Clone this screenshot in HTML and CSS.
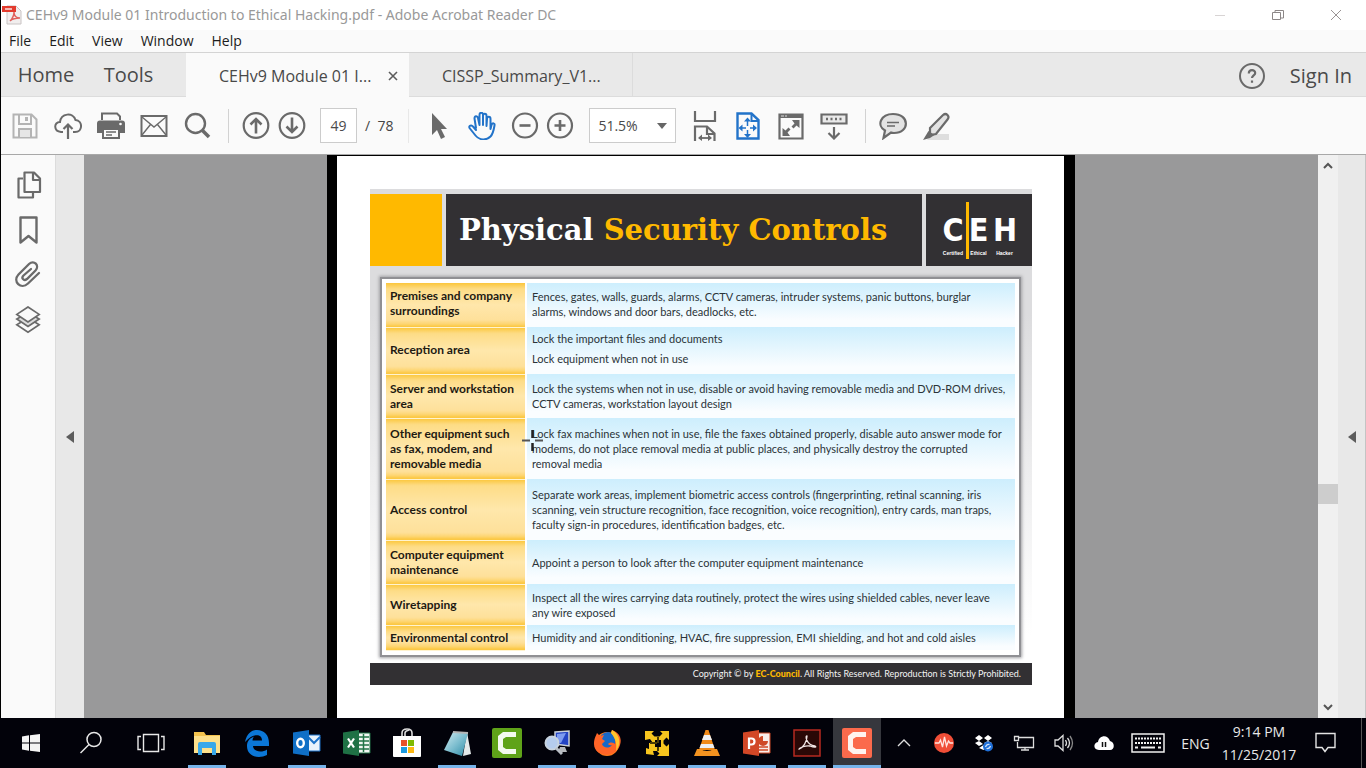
FILE: index.html
```html
<!DOCTYPE html>
<html lang="en">
<head>
<meta charset="utf-8">
<title>CEHv9 Module 01 Introduction to Ethical Hacking.pdf - Adobe Acrobat Reader DC</title>
<link rel="stylesheet" href="styles.css">
</head>
<body>
<div class="window">
  <header class="titlebar">
    <svg class="app-icon" width="20" height="20" viewBox="0 0 20 20"><path d="M5 1h9l5 5v13H5z" fill="#f1eeee" stroke="#c9c4c4"/><path d="M8 16c3-3 4-6 4-9 0 4 2 6 6 6-4 0-8 1-10 3z" fill="none" stroke="#e0605c" stroke-width="1.4"/><path d="M0 1h14v6H0z" fill="#e23b2e"/><path d="M3 4h7" stroke="#f6b8b2" stroke-width="2"/></svg>
    <h1 class="titlebar-text">CEHv9 Module 01 Introduction to Ethical Hacking.pdf - Adobe Acrobat Reader DC</h1>
    <div class="window-controls">
      <button aria-label="Minimize"><svg width="12" height="12"><path d="M1 6.500h10" stroke="#d8d4d4"/></svg></button>
      <button aria-label="Restore"><svg width="12" height="12" fill="none" stroke="#8c8787"><path d="M.5 3.500h8v7h-8zM3 3V1.500h8.500V9H9"/></svg></button>
      <button aria-label="Close"><svg width="12" height="12"><path d="M1 1l10 10M11 1L1 11" stroke="#9a9494"/></svg></button>
    </div>
  </header>
  <nav class="menubar">
    <button>File</button><button>Edit</button><button>View</button><button>Window</button><button>Help</button>
  </nav>
  <div class="tabs">
    <button class="tab-main">Home</button>
    <button class="tab-main tab-tools">Tools</button>
    <div class="tab tab-active"><button>CEHv9 Module 01 I...</button><button class="tab-close" aria-label="Close tab"><svg width="10" height="10"><path d="M1 1l8 8M9 1L1 9" stroke="#5c5c5c" stroke-width="1.600"/></svg></button></div>
    <div class="tab tab-second"><button>CISSP_Summary_V1...</button></div>
    <div class="account">
      <button aria-label="Help"><svg width="28" height="28" viewBox="0 0 28 28" fill="none" stroke="#6a6a6a" stroke-width="2"><circle cx="14" cy="14" r="12"/><path d="M10.800 11.500c0-4.500 6.400-4.200 6.400-.5 0 2.300-3.200 2.500-3.200 5M14 18.500v2.200" stroke-width="2.200"/></svg></button>
      <button class="sign-in">Sign In</button>
    </div>
  </div>
  <div class="toolbar">
    <div class="tool-group files">
      <button aria-label="Save"><svg viewBox="0 0 28 28" fill="none" stroke="#b4b4b4" stroke-width="2"><path d="M2.500 2.500h18l5 5v18h-23zM8 3v9h12V3M8 25v-8h12v8"/><path d="M14 5h3v4h-3z" fill="#b4b4b4" stroke="none"/><path d="M9 18h10v7H9z" fill="#e6e6e6" stroke="none"/></svg></button>
      <button aria-label="Upload"><svg viewBox="0 0 28 28" fill="none" stroke="#6a6a6a" stroke-width="2"><path d="M9 20H7C-.5 19.500-.5 10 6 10c1-9 13-10 15.500-2C29 8.500 29 20 21 20h-2"/><path d="M14 27V13M9.500 17l4.500-4.500 4.500 4.500" stroke-width="2.200"/></svg></button>
      <button aria-label="Print"><svg viewBox="0 0 28 28"><path d="M5 8V1.500h15l3 3V8" fill="#fafafa" stroke="#6a6a6a" stroke-width="2"/><path d="M3 8.500h22q3 0 3 3V21h-5v-4H5v4H0v-9.500q0-3 3-3z" fill="#6a6a6a"/><path d="M6 17h16v9H6z" fill="#fafafa" stroke="#6a6a6a" stroke-width="2"/><path d="M9 20h10M9 23h6" stroke="#6a6a6a" stroke-width="1.500"/><circle cx="23.500" cy="12" r="1.300" fill="#fafafa"/></svg></button>
      <button aria-label="Send by email"><svg viewBox="0 0 28 28" fill="none" stroke="#6a6a6a"><path d="M1.500 4h25v20h-25z" stroke-width="2"/><path d="M2 5l12 10L26 5M2 23l8.500-10.500M26 23l-8.500-10.500" stroke-width="1.400"/></svg></button>
      <button aria-label="Search"><svg viewBox="0 0 28 28" fill="none" stroke="#6a6a6a"><circle cx="12.500" cy="11.500" r="9.500" stroke-width="2.400"/><path d="M19 18l7 7" stroke-width="3.600"/></svg></button>
    </div>
    <span class="separator"></span>
    <div class="tool-group pages">
      <button aria-label="Previous page"><svg viewBox="0 0 28 28" fill="none" stroke="#6a6a6a" stroke-width="2.200"><circle cx="14" cy="13.500" r="12.300"/><path d="M14 21.500V7.500M8.500 12.500L14 7l5.500 5.500" stroke-width="2.600"/></svg></button>
      <button aria-label="Next page"><svg viewBox="0 0 28 28" fill="none" stroke="#6a6a6a" stroke-width="2.200"><circle cx="14" cy="13.500" r="12.300"/><path d="M14 5.500v14M8.500 14.500l5.500 5.500 5.500-5.500" stroke-width="2.600"/></svg></button>
      <input class="page-number" type="text" value="49" aria-label="Page number">
      <span class="page-total">/&nbsp; 78</span>
    </div>
    <span class="separator faint"></span>
    <div class="tool-group view">
      <button aria-label="Select"><svg viewBox="0 0 28 28"><path d="M7 1v22l5-5 4 9 4-2-4-8h6z" fill="#6a6a6a"/></svg></button>
      <button aria-label="Pan"><svg viewBox="0 0 28 28" fill="#fafafa" stroke="#2273c9" stroke-width="2" stroke-linejoin="round" stroke-linecap="round"><path d="M8 16L6.500 6.500c0-3 3-3 3.500-.5l1.500 7V3c0-3 3.500-3 3.500 0v10V4c0-3 3.500-3 3.500 0v10l.5-7c0-3 3.500-3 3.500 0v10l1-4c1-2.500 3.500-2 3 .5-1 6-2 9-4 11-4 4-11 4-15-1L1.500 16c-1-2.500 2-3.500 3.500-1.500l3 3.500"/></svg></button>
      <button aria-label="Zoom out"><svg viewBox="0 0 28 28" fill="none" stroke="#6a6a6a" stroke-width="2.200"><circle cx="14" cy="13.500" r="12"/><path d="M8.500 13.500h11" stroke-width="2.600"/></svg></button>
      <button class="zoom-in" aria-label="Zoom in"><svg viewBox="0 0 28 28" fill="none" stroke="#6a6a6a" stroke-width="2.200"><circle cx="14" cy="13.500" r="12"/><path d="M8.500 13.500h11M14 8v11" stroke-width="2.600"/></svg></button>
      <div class="zoom-box"><select aria-label="Zoom level"><option>51.5%</option></select></div>
      <button aria-label="Fit width"><svg viewBox="0 0 28 32" class="tall" fill="none" stroke="#6a6a6a" stroke-width="2.200"><path d="M4 1v10h20V1M4 31V16.500h12l7.500 7V31M16 17v7h7"/><path d="M8 28h12" stroke-width="1.800"/><path d="M11 24.500V31l-4-3zM17 24.500V31l4-3z" fill="#6a6a6a" stroke="none"/></svg></button>
      <button aria-label="Fit page"><svg viewBox="0 0 28 28" fill="none" stroke="#2273c9" stroke-width="2.400"><path d="M3.500 1.500h14l7 6.500v18.500h-21z"/><path d="M17.500 2v7h7" stroke-width="2"/><path d="M13.500 9v14M7 16h14" stroke-width="1.500" stroke-dasharray="5 4"/><path d="M13.500 5.500l3.500 4h-7zM13.500 26l3.500-4h-7zM4.500 16l4-3.500v7zM23 16l-4-3.500v7z" fill="#2273c9" stroke="none"/></svg></button>
      <button aria-label="Full screen"><svg viewBox="0 0 28 28"><path d="M2.500 2.500h23v24h-23z" fill="none" stroke="#6a6a6a" stroke-width="2.200"/><path d="M2 2h24v4H2z" fill="#6a6a6a"/><path d="M4 4h3M8 4h2" stroke="#ddd"/><path d="M22.500 8v8l-3-2.500-3 3-2-2 3-3L15 8zM5.500 24v-8l3 2.500 3-3 2 2-3 3L13 24z" fill="#6a6a6a"/></svg></button>
      <button aria-label="Read mode"><svg viewBox="0 0 28 28" fill="none" stroke="#6a6a6a" stroke-width="2.200"><path d="M1.500 2.500h25v9h-25z" fill="#e9e9e9"/><path d="M6 7h2M10.500 7h2M15 7h2M19.500 7h2" stroke-width="2.500"/><path d="M14 15v11M8.500 21l5.500 5.500 5.500-5.500"/></svg></button>
    </div>
    <span class="separator"></span>
    <div class="tool-group comment">
      <button aria-label="Comment"><svg viewBox="0 0 28 28" stroke="#6a6a6a"><path d="M14 2c17 0 17 19 1 19-2 0-2 0-3-.5L4.500 26l1.500-7.500C-3 13 2 2 14 2z" fill="#e3e3e3" stroke-width="2.200"/><path d="M8 10.500h12M8 14h8" stroke-width="1.500"/></svg></button>
      <button aria-label="Highlight"><svg viewBox="0 0 28 28"><path d="M10 22h17v6H5z" fill="#dedede"/><path d="M8 16L21 3q2.500-2 4.500 0t0 4.500L14 22l-6 1z" fill="#e3e3e3" stroke="#6a6a6a" stroke-width="2.200"/><path d="M6.500 19l6 4-4.500 3-7 2z" fill="#6a6a6a"/></svg></button>
    </div>
  </div>
  <main class="workspace">
    <aside class="rail">
      <button aria-label="Page thumbnails"><svg viewBox="0 0 28 28" fill="none" stroke="#6a6a6a" stroke-width="2.200" stroke-linejoin="round"><path d="M9 7.500H4.500v19H19V21"/><path d="M10.500 1.500h9.500l6 6V21H10.500zM19 2v7h6"/></svg></button>
      <button aria-label="Bookmarks"><svg viewBox="0 0 28 28" fill="none" stroke="#6a6a6a" stroke-width="2.400" stroke-linejoin="round"><path d="M6.500 1.500h16v25L14.500 20l-8 6.500z"/></svg></button>
      <button aria-label="Attachments"><svg viewBox="0 0 28 28" fill="none" stroke="#6a6a6a" stroke-width="2.300" stroke-linecap="round"><path d="M25 12L14 22.500c-7 6.500-16-2-9.500-9L15 3c5-4.500 11 1.500 6.500 6.500L13 18c-3.500 2.500-6-1-3.500-3.500L17 8"/></svg></button>
      <button aria-label="Layers"><svg viewBox="0 0 28 30" class="tall" fill="#fafafa" stroke="#6a6a6a" stroke-width="1.800"><path d="M14 12.500l12 7.500-12 8L2 20z"/><path d="M14 7l12 7-12 8L2 14z" fill="#dcdcdc"/><path d="M14 1l12 8-12 8L2 9z"/></svg></button>
    </aside>
    <button class="pane-toggle left" aria-label="Expand navigation pane"><svg width="8" height="14"><path d="M8 1v12L0 7z" fill="#5c5c5c"/></svg></button>
    <section class="document">
      <article class="page">
        <div class="slide">
          <div class="slide-head">
            <div class="swatch"></div>
            <h2 class="slide-title">Physical <span>Security Controls</span></h2>
            <div class="ceh">
              <b>C</b><b>E</b><b>H</b>
              <small>Certified</small><small>Ethical</small><small>Hacker</small>
              <i class="ceh-bar"></i>
            </div>
          </div>
          <div class="panel">
            <table class="controls">
              <tr class="row-2 raised"><th scope="row">Premises and company<br>surroundings</th><td>Fences, gates, walls, guards, alarms, CCTV cameras, intruder systems, panic buttons, burglar<br>alarms, windows and door bars, deadlocks, etc.</td></tr>
              <tr class="row-split raised"><th scope="row">Reception area</th><td><p>Lock the important files and documents</p><p>Lock equipment when not in use</p></td></tr>
              <tr class="row-2"><th scope="row">Server and workstation<br>area</th><td>Lock the systems when not in use, disable or avoid having removable media and DVD-ROM drives,<br>CCTV cameras, workstation layout design</td></tr>
              <tr class="row-3"><th scope="row">Other equipment such<br>as fax, modem, and<br>removable media</th><td>Lock fax machines when not in use, file the faxes obtained properly, disable auto answer mode for<br>modems, do not place removal media at public places, and physically destroy the corrupted<br>removal media</td></tr>
              <tr class="row-3"><th scope="row">Access control</th><td>Separate work areas, implement biometric access controls (fingerprinting, retinal scanning, iris<br>scanning, vein structure recognition, face recognition, voice recognition), entry cards, man traps,<br>faculty sign-in procedures, identification badges, etc.</td></tr>
              <tr class="row-2"><th scope="row">Computer equipment<br>maintenance</th><td>Appoint a person to look after the computer equipment maintenance</td></tr>
              <tr class="row-wire"><th scope="row">Wiretapping</th><td>Inspect all the wires carrying data routinely, protect the wires using shielded cables, never leave<br>any wire exposed</td></tr>
              <tr class="row-1"><th scope="row">Environmental control</th><td>Humidity and air conditioning, HVAC, fire suppression, EMI shielding, and hot and cold aisles</td></tr>
            </table>
          </div>
          <footer class="slide-foot">Copyright © by <b>EC-Council</b>. All Rights Reserved. Reproduction is Strictly Prohibited.</footer>
          <svg class="cursor" width="24" height="24" stroke="#222" stroke-width="2.500"><path d="M11.500 1v8M11.500 14v8"/><path d="M1 11.500h8M14 11.500h8" stroke="#555" stroke-width="2"/></svg>
        </div>
      </article>
    </section>
    <div class="scrollbar">
      <button aria-label="Scroll up"><svg width="10" height="8"><path d="M1 6l4-4 4 4" fill="none" stroke="#555" stroke-width="2"/></svg></button>
      <div class="track"><span class="thumb"></span></div>
      <button aria-label="Scroll down"><svg width="10" height="8"><path d="M1 2l4 4 4-4" fill="none" stroke="#555" stroke-width="2"/></svg></button>
    </div>
    <button class="pane-toggle right" aria-label="Expand tools pane"><svg width="8" height="14"><path d="M8 1v12L0 7z" fill="#5c5c5c"/></svg></button>
  </main>
</div>
<footer class="taskbar">
  <div class="shell">
    <button aria-label="Start"><svg width="20" height="20" viewBox="0 0 20 20"><path d="M1 3.500l7-1.200v7.200H1zM9 2.200L19 1v8.500H9zM1 10.500h7v7.200l-7-1.200zM9 10.500h10V19l-10-1.300z" fill="#f4f4f4"/></svg></button>
    <button aria-label="Search"><svg width="24" height="24" fill="none" stroke="#e8e8e8" stroke-width="1.500"><circle cx="15" cy="8.500" r="7"/><path d="M10 13.500L1.500 22"/></svg></button>
    <button aria-label="Task view"><svg width="28" height="20" fill="none" stroke="#e8e8e8" stroke-width="1.400"><path d="M6.500 1.500h15v17h-15zM4 3.500H1v13h3M24 3.500h3v13h-3"/></svg></button>
  </div>
  <div class="apps">
    <button class="running" aria-label="File Explorer"><svg viewBox="0 0 28 28"><path d="M1 3h10l2 3h14v18H1z" fill="#f4c34e"/><path d="M1 7h26v17H1z" fill="#fde08b"/><path d="M5 26V15q0-2 2-2h14q2 0 2 2v11h-4v-7H9v7z" fill="#38a8ea"/></svg></button>
    <button aria-label="Edge"><svg viewBox="0 0 28 28"><path d="M2 13C4 4 9 1 14 1c7 0 12 5 12 13v3H10c.5 6 9 7 14 3.500V26c-8 4-20 2-20-9 0-5 3-8 7-9.500-1 1.200-1.500 2.500-1.500 4H19c0-7-9-7.500-17 1.500z" fill="#0b77d8"/></svg></button>
    <button class="running" aria-label="Outlook"><svg viewBox="0 0 28 28"><path d="M14 6h13v16H14z" fill="#e8f2fc" stroke="#1c72ca"/><path d="M14 7l7 7 6-6" fill="none" stroke="#1c72ca" stroke-width="2"/><path d="M0 3.500L16 1v26L0 24.500z" fill="#0f6fc6"/><ellipse cx="7.500" cy="14" rx="3.300" ry="4.200" fill="none" stroke="#fff" stroke-width="2.400"/></svg></button>
    <button aria-label="Excel"><svg viewBox="0 0 28 28"><path d="M14 4h13v20H14z" fill="#f1f6f2" stroke="#217346"/><path d="M15 8h11M15 12h11M15 16h11M15 20h11M20.500 5v18" stroke="#217346" stroke-width="1.500"/><path d="M0 3.500L16 1v26L0 24.500z" fill="#1f7145"/><path d="M5 9.500l6 9M11 9.500l-6 9" stroke="#fff" stroke-width="2.200"/></svg></button>
    <button aria-label="Store"><svg class="lg" viewBox="0 0 30 30"><path d="M10 8V5q0-4 5-4t5 4v3M13 8V5q0-2 4-3" fill="none" stroke="#ddd" stroke-width="1.600"/><path d="M1 8h28v20q0 1-1 1H2q-1 0-1-1z" fill="#fff"/><path d="M9 12h6v6H9z" fill="#e8502a"/><path d="M16 12h6v6h-6z" fill="#7fba00"/><path d="M9 19h6v6H9z" fill="#1c9ae0"/><path d="M16 19h6v6h-6z" fill="#fdb813"/></svg></button>
    <button class="running" aria-label="Notepad"><svg viewBox="0 0 28 28"><defs><linearGradient id="note" x2="1" y2="1"><stop stop-color="#d2ebf1"/><stop offset=".5" stop-color="#7fbfd0"/><stop offset="1" stop-color="#2c8aa5"/></linearGradient></defs><path d="M24 3l4 22-8 2z" fill="#e4e9ea"/><path d="M10 3l15 1-6 23-18-6z" fill="url(#note)"/><path d="M10 3l15 1" stroke="#b5b5b5" stroke-width="2"/></svg></button>
    <button aria-label="Camtasia"><svg class="lg" viewBox="0 0 30 30"><rect width="30" height="30" rx="2" fill="#5fa319"/><path d="M24 4v5H14l-3 2v8l3 2h10v5H11l-5-4V8l5-4z" fill="#f4faf0"/></svg></button>
    <button class="running" aria-label="Remote Desktop"><svg viewBox="0 0 28 28"><path d="M12 3l14-1v15l-14-2z" fill="#2444c4" stroke="#cbd1d8" stroke-width="1.500"/><path d="M14 5l9-1-5 10-4-1z" fill="#7e9cf0"/><path d="M17 18h5l2 5h-9z" fill="#b6b9bd"/><circle cx="9" cy="14" r="6.500" fill="#b5cced" stroke="#c8d3df" stroke-width="2"/><path d="M13 19l6 6" stroke="#babfc6" stroke-width="3"/></svg></button>
    <button class="running" aria-label="Firefox"><svg viewBox="0 0 28 28"><circle cx="14" cy="15" r="12" fill="#ff7a1a"/><circle cx="15" cy="12" r="9" fill="#1769c8"/><path d="M1 15C1 9 3 7 4 4l3 3 4-1-2 4 3 2-3 3c1 4 7 5 10 1-2 1-4-1-4-1 3-3 6-1 7 0 1-5-1-8-4-11l1-3c8 3 10 9 8 15-4 14-26 12-26-1z" fill="#ff6427"/><path d="M19 1c9 5 9 15 4 21 1-6 0-12-5-18z" fill="#ffc52c"/></svg></button>
    <button class="running" aria-label="VMware"><svg viewBox="0 0 28 28"><path d="M2 2h9l-2.500 2.500 3 3h5l3-3L17 2h9v9l-2.500-2.500-3 3v3l3 3L26 15v12H14l2.500-2.500L14 22h-4l1 4-8-1v-6l3 1v-6h4l-3-4-5 1z" fill="#f7c51e"/><path d="M12 11h6v7h-6z" fill="#02020a"/><path d="M7 14h7M15 8v6M15 18v4" stroke="#4b3b06" stroke-width="2"/></svg></button>
    <button class="running" aria-label="VLC"><svg viewBox="0 0 28 28"><path d="M12.500 1h3L22 21H6z" fill="#f08a18"/><path d="M11 6h6l2 5H9zM8 15h12l1.500 4h-15z" fill="#eef0f2"/><path d="M4 20h3q7 4 14 0h3l3 7H1z" fill="#f39320"/></svg></button>
    <button class="running" aria-label="PowerPoint"><svg viewBox="0 0 28 28"><path d="M14 4h13v20H14z" fill="#f8eeea" stroke="#cf4a27"/><path d="M16 18h9M16 21h9" stroke="#cf4a27" stroke-width="1.500"/><path d="M20 7v5h5a5 5 0 1 1-5-5z" fill="#cf4a27"/><path d="M0 3.500L16 1v26L0 24.500z" fill="#d24726"/><path d="M6 20V9.500h2.500q3 0 3 3t-3 3H6" fill="none" stroke="#fff" stroke-width="2.200"/></svg></button>
    <button class="running" aria-label="Acrobat Reader"><svg viewBox="0 0 28 28"><path d="M1 1h26v26H1z" fill="#2a0806" stroke="#b62a20" stroke-width="1.500"/><path d="M6 20c4-1 8-7 8-13-2-1-1 9 8 10 2 1 0 2-5 0-4-1-11 2-11 3z" fill="none" stroke="#f2e5e4" stroke-width="1.300"/></svg></button>
    <button class="running current" aria-label="Camtasia Recorder"><svg class="lg" viewBox="0 0 30 30"><rect width="30" height="30" rx="2" fill="#fb6a4c"/><path d="M24 4v5H14l-3 2v8l3 2h10v5H11l-5-4V8l5-4z" fill="#fff3ef"/></svg></button>
  </div>
  <div class="tray">
    <button aria-label="Show hidden icons"><svg width="14" height="8"><path d="M1 7l6-6 6 6" fill="none" stroke="#ddd" stroke-width="1.400"/></svg></button>
    <button aria-label="Recorder"><svg width="20" height="20"><circle cx="10" cy="10" r="10" fill="#f04e37"/><path d="M1 10h4l1.500-3 2 7 2-10 2 9 2-5 1.500 2h3" fill="none" stroke="#ffe5df" stroke-width="1.300"/></svg></button>
    <button aria-label="Dropbox"><svg width="20" height="18"><path d="M1 4l4-3 4 3-4 3zM10 4l4-3 4 3-4 3zM1 9l4-2 4 3-4 2zM10 9l4-2 4 2-4 3zM5 14l4.500-3 3 2-3 3z" fill="#fff"/><circle cx="14" cy="12.500" r="5" fill="#1f6fd8"/><path d="M11.500 13q1-3 4-2.500M16.500 12q-1 3-4 2.500" fill="none" stroke="#cfe2fa" stroke-width="1.200"/></svg></button>
    <button aria-label="Network"><svg width="22" height="16" fill="none" stroke="#ddd" stroke-width="1.300"><path d="M6 2.500h14.500v10H4.500V7M1.500 1.500h4v4h-4zM12 12.500V15M8 15h8"/></svg></button>
    <button aria-label="Volume"><svg width="20" height="18" fill="none" stroke="#ddd" stroke-width="1.300"><path d="M1 6h3l5-4.500v15L4 12H1z"/><path d="M11.500 6q2 3 0 6M13.500 4q4 5 0 10"/><path d="M16 2q5 7 0 14" stroke="#888"/></svg></button>
    <button aria-label="Cloud sync"><svg width="20" height="15"><path d="M5 14C-1 14-1 7 4 6c1-7 10-8 12-1 5 1 5 9 0 9z" fill="#fff"/><path d="M8.500 6v5M11.500 6v5" stroke="#111" stroke-width="1.500"/></svg></button>
    <button class="tray-wide" aria-label="Touch keyboard"><svg width="34" height="20" fill="none" stroke="#f0f0f0" stroke-width="1.500"><path d="M1 1h32v18H1z"/><path d="M4 5.500h26M4 10h26" stroke-dasharray="2 1" stroke-width="2"/><path d="M4 14.500h3M10 14.500h14M27 14.500h3" stroke-width="2"/></svg></button>
    <button class="lang">ENG</button>
    <button class="clock"><time>9:14 PM</time><time>11/25/2017</time></button>
    <button class="notify" aria-label="Notifications"><svg width="22" height="22"><path d="M1 1.500h19v14h-7l-3 4-3-4H1z" fill="none" stroke="#e4e4e4" stroke-width="1.400"/></svg></button>
    <span class="show-desktop"></span>
  </div>
</footer>
</body>
</html>
```
FILE: styles.css
```css
* { box-sizing: border-box; }

body {
  margin: 0;
  height: 100vh;
  display: flex;
  flex-direction: column;
  overflow: hidden;
  background: #000;
  color: #444;
  font-family: "Open Sans", "Noto Sans", sans-serif;
}

button {
  display: flex;
  align-items: center;
  justify-content: center;
  padding: 0;
  border: 0;
  background: none;
  color: inherit;
  font: inherit;
  white-space: nowrap;
}

svg { display: block; flex: none; }

.window {
  flex: 1;
  min-height: 0;
  display: flex;
  flex-direction: column;
  border-left: 1px solid #000;
  background: #fafafa;
}

/* Title and menu */
.titlebar {
  height: 30px;
  display: flex;
  align-items: center;
  gap: 4px;
  padding-left: 1px;
  background: #fff;
}
.titlebar-text {
  flex: 1;
  margin: 0;
  color: #999;
  font-family: "Noto Sans", sans-serif;
  font-size: 14px;
  font-weight: 400;
  line-height: 28px;
  white-space: nowrap;
}
.window-controls { display: flex; gap: 10px; padding-right: 6px; }
.window-controls button { width: 48px; height: 28px; }

.menubar {
  height: 23px;
  display: flex;
  gap: 18px;
  padding: 0 0 2px 8px;
  border-bottom: 1px solid #d4d4d4;
  color: #1c1c1c;
  font-size: 14px;
}

/* Tabs */
.tabs {
  height: 44px;
  display: flex;
  background: #e9e9e9;
  border-bottom: 1px solid #dcdcdc;
}
.tab-main { width: 90px; font-size: 20px; font-weight: 500; color: #4a4a4a; }
.tab-tools { width: 95px; padding-right: 20px; }
.tab { display: flex; align-items: center; padding-top: 2px; font-size: 16px; color: #484848; }
.tab-active { width: 223px; gap: 17px; padding-left: 33px; background: #fafafa; margin-bottom: -1px; }
.tab-second { width: 224px; padding-left: 33px; border-right: 1px solid #dcdcdc; }
.account { display: flex; gap: 24px; margin-left: auto; padding: 2px 14px 0 0; }
.sign-in { font-size: 20px; font-weight: 500; color: #4a4a4a; }

/* Toolbar */
.toolbar {
  height: 58px;
  display: flex;
  align-items: center;
  padding-left: 10px;
  border-bottom: 1px solid #a8a8a8;
}
.tool-group { display: flex; align-items: center; }
.tool-group svg, .rail svg { width: 28px; height: 28px; }
.tool-group svg.tall { height: 32px; }
.files { gap: 15px; }
.pages { gap: 8px; }
.view, .comment { gap: 15px; }
.separator { width: 1px; height: 34px; margin: 0 13px 0 17px; background: #d2d2d2; }
.faint { margin: 0 16px 0 15px; background: #e8e8e8; }
.page-number {
  width: 37px;
  height: 35px;
  margin-left: 6px;
  padding: 0;
  border: 1px solid #ccc;
  background: #fff;
  color: #4a4a4a;
  font: 14px "Open Sans", sans-serif;
  text-align: center;
}
.page-total { font-size: 14px; }
.zoom-in { margin-left: -8px; }
.zoom-box { display: flex; align-items: center; position: relative; }
.zoom-box::after {
  content: "";
  position: absolute;
  right: 9px;
  border: 5px solid transparent;
  border-top: 6px solid #666;
  border-bottom: 0;
}
.zoom-box select {
  width: 87px;
  height: 35px;
  padding: 0 8px;
  appearance: none;
  border: 1px solid #ccc;
  border-radius: 0;
  background: #fff;
  color: #4a4a4a;
  font: 14px "Open Sans", sans-serif;
}

/* Workspace */
.workspace { flex: 1; min-height: 0; display: flex; }
.rail {
  width: 55px;
  display: flex;
  flex-direction: column;
  align-items: center;
  gap: 17px;
  padding-top: 16px;
  border-right: 1px solid #dcdcdc;
}
.pane-toggle { width: 28px; background: #e8e8e8; }
.pane-toggle.right { border-right: 1px solid #c4c4c4; }
.document {
  flex: 1;
  display: flex;
  justify-content: center;
  overflow: hidden;
  background: #99999a;
}
.scrollbar {
  width: 20px;
  display: flex;
  flex-direction: column;
  background: #f0f0f0;
}
.scrollbar button { height: 22px; }
.track { flex: 1; display: flex; flex-direction: column; padding-top: 307px; }
.thumb { height: 20px; background: #cdcdcd; }

/* PDF page */
.page {
  width: 100%;
  max-width: 748px;
  padding: 33px 32px 0 33px;
  border: solid #000;
  border-width: 1px 11px 0 10px;
  background: #fff;
}
.slide {
  position: relative;
  padding-top: 5px;
  background: linear-gradient(#dcdcde 25%, #fff 90%);
  color: #2b3338;
  font-family: Lato, "Open Sans", sans-serif;
}
.slide-head {
  display: grid;
  grid-template-columns: 72px 1fr 106px;
  gap: 4px;
  height: 72px;
}
.swatch { background: #ffb900; }
.slide-title {
  display: flex;
  align-items: center;
  margin: 0;
  padding-left: 13px;
  background: #323033;
  color: #fff;
  font: bold 29px "DejaVu Serif", serif;
  white-space: pre;
}
.slide-title span { color: #ffb900; }
.ceh {
  position: relative;
  display: grid;
  grid-template-columns: 22px 29px 23px;
  grid-template-rows: 36px 10px;
  align-content: center;
  justify-content: center;
  padding-top: 10px;
  background: #323033;
  color: #fff;
  text-align: center;
}
.ceh b { font: bold 32px/36px "Liberation Sans Narrow", "DejaVu Sans Condensed", sans-serif; }
.ceh small { font: bold 5px/10px "Liberation Sans Narrow", sans-serif; }
.ceh-bar { position: absolute; left: 40px; top: 8px; width: 3px; height: 57px; background: #ffb900; }

.panel {
  margin: 11px 11px 6px 10px;
  padding: 4px;
  border: 2px solid #909094;
  box-shadow: 0 0 3px 1px #a0a0a4;
  background: #fff;
}
.controls { width: 100%; border-collapse: collapse; font-size: 11px; line-height: 15px; }
.controls th, .controls td { padding: 0 4px; text-align: left; white-space: nowrap; }
.controls th {
  width: 140px;
  border-right: 2px solid #fff;
  border-bottom: 1px solid #fff3cf;
  background: linear-gradient(#fbc63c, #fddc86 6px, #ffe7ab 50%, #fee09a calc(100% - 7px), #fdd571 calc(100% - 3px), #fbc63c);
  color: #1e1a12;
  font-size: 12px;
}
.controls td { padding-left: 5px; background: linear-gradient(#cdeefd, #fafdff 85%); }
.controls p { margin: 0; line-height: 20px; }
.controls .raised th, .controls .raised td { padding-bottom: 3px; }
.row-1 { height: 25px; }
.row-2 { height: 44px; }
.row-split { height: 47px; }
.row-3 { height: 61px; }
.row-wire { height: 41px; }

.slide-foot {
  height: 22px;
  padding-right: 11px;
  background: #323033;
  color: #f4f4f4;
  font-size: 9px;
  line-height: 22px;
  text-align: right;
}
.slide-foot b { color: #ffb900; font-weight: 900; }
.cursor { position: absolute; left: 151px; top: 240px; }

/* Taskbar */
.taskbar { height: 50px; display: flex; background: #02020a; color: #e8e8e8; }
.shell { display: flex; gap: 12px; padding: 0 8px 0 7px; }
.shell button, .apps button { width: 48px; height: 50px; }
.apps { display: flex; gap: 2px; }
.apps svg { width: 28px; height: 28px; }
.apps svg.lg { width: 30px; height: 30px; }
.running { background: linear-gradient(#76b3ea, #76b3ea) center bottom / 38px 3px no-repeat; }
.current { background-color: #36373d; background-size: 48px 3px; }
.tray { display: flex; align-items: center; margin-left: auto; font-size: 14px; }
.tray button { width: 40px; height: 50px; }
.tray .tray-wide { width: 48px; }
.tray .lang { width: 47px; }
.tray .clock { flex-direction: column; width: 80px; line-height: 23px; }
.tray .notify { width: 54px; }
.show-desktop { width: 5px; height: 50px; margin-left: 8px; border-left: 1px solid #555; }
```
